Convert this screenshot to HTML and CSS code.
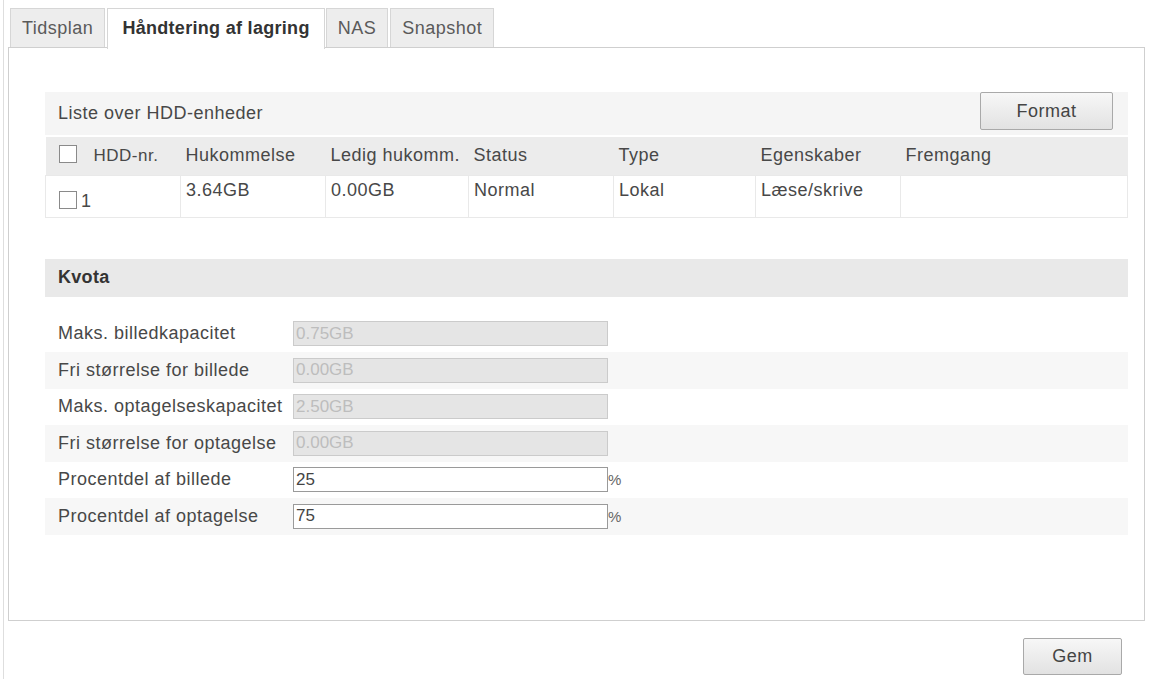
FILE: index.html
```html
<!DOCTYPE html>
<html lang="da">
<head>
    <meta charset="UTF-8">
    <meta name="viewport" content="width=device-width, initial-scale=1.0">
    <link rel="stylesheet" href="styles.css">
</head>
<body>
	<div class="frame">
		<ul class="tabs">
			<li class="tab">Tidsplan</li>
			<li class="tab active">Håndtering af lagring</li>
			<li class="tab">NAS</li>
			<li class="tab">Snapshot</li>
		</ul>
		<div class="panel">
			<div class="section">
				<div class="section-head">
					<span>Liste over HDD-enheder</span>
					<button class="btn btn-format">Format</button>
				</div>
				<table class="hdd">
					<tr class="hdd-header">
						<td class="c1"><span class="check"></span><span class="hdd-no">HDD-nr.</span></td>
						<td class="c2">Hukommelse</td>
						<td class="c3">Ledig hukomm.</td>
						<td class="c4">Status</td>
						<td class="c5">Type</td>
						<td class="c6">Egenskaber</td>
						<td class="c7">Fremgang</td>
					</tr>
					<tr class="hdd-row">
						<td class="c1"><span class="check"></span><span class="row-no">1</span></td>
						<td>3.64GB</td>
						<td>0.00GB</td>
						<td>Normal</td>
						<td>Lokal</td>
						<td>Læse/skrive</td>
						<td></td>
					</tr>
				</table>
			</div>
			<div class="section kvota">
				<div class="section-head bold">Kvota</div>
				<div class="form">
					<div class="form-row">
						<label>Maks. billedkapacitet</label>
						<input class="field" type="text" value="0.75GB" disabled>
					</div>
					<div class="form-row">
						<label>Fri størrelse for billede</label>
						<input class="field" type="text" value="0.00GB" disabled>
					</div>
					<div class="form-row">
						<label>Maks. optagelseskapacitet</label>
						<input class="field" type="text" value="2.50GB" disabled>
					</div>
					<div class="form-row">
						<label>Fri størrelse for optagelse</label>
						<input class="field" type="text" value="0.00GB" disabled>
					</div>
					<div class="form-row">
						<label>Procentdel af billede</label>
						<input class="field" type="text" value="25"><span class="unit">%</span>
					</div>
					<div class="form-row">
						<label>Procentdel af optagelse</label>
						<input class="field" type="text" value="75"><span class="unit">%</span>
					</div>
				</div>
			</div>
		</div>
		<div class="actions">
			<button class="btn btn-save">Gem</button>
		</div>
	</div>
</body>
</html>
```

FILE: styles.css
```css
body {
	margin: 0;
	font-family: "Liberation Sans", Arial, sans-serif;
	font-size: 18px;
	letter-spacing: 0.5px;
	color: #484848;
	background: #fff;
}
.frame {
	margin-left: 3px;
	border-left: 1px solid #dedede;
	padding: 8px 20px 0 4px;
	min-height: 679px;
	box-sizing: border-box;
}
.tabs {
	list-style: none;
	margin: 0 0 0 2px;
	padding: 0;
	display: flex;
	height: 39px;
}
.tab {
	height: 38px;
	line-height: 38px;
	padding: 0 11px;
	margin-right: 2px;
	background: #ededed;
	border: 1px solid #d6d6d6;
	border-bottom: none;
	color: #5a5a5a;
}
.tab.active {
	position: relative;
	z-index: 1;
	height: 40px;
	margin-right: 1px;
	padding: 0 14px;
	background: #fff;
	font-weight: bold;
	letter-spacing: 0.3px;
	color: #333;
}
.panel {
	border: 1px solid #cfcfcf;
	padding: 44px 16px 85px 36px;
	background: #fff;
}
.section-head {
	display: flex;
	align-items: center;
	justify-content: space-between;
	height: 43px;
	padding: 0 15px 0 13px;
	background: #f5f5f5;
}
.section-head.bold {
	height: 38px;
	font-weight: bold;
	letter-spacing: 0.3px;
	background: #e9e9e9;
	color: #333;
}
.btn {
	font-family: "Liberation Sans", Arial, sans-serif;
	font-size: 18px;
	letter-spacing: 0.5px;
	color: #444;
	background: linear-gradient(#f7f7f7, #e2e2e2);
	border: 1px solid #a9a9a9;
	border-radius: 2px;
	padding: 0;
}
.btn-format {
	width: 133px;
	height: 38px;
	margin-top: -5px;
}
.hdd {
	width: 100%;
	margin-top: 2px;
	border-collapse: collapse;
	table-layout: fixed;
}
.hdd td {
	padding: 0 5px;
	white-space: nowrap;
}
.hdd .c1 { width: 135px; padding-left: 13px; box-sizing: border-box; }
.hdd .c2 { width: 145px; box-sizing: border-box; }
.hdd .c3 { width: 143px; box-sizing: border-box; }
.hdd .c4 { width: 145px; box-sizing: border-box; }
.hdd .c5 { width: 142px; box-sizing: border-box; }
.hdd .c6 { width: 145px; box-sizing: border-box; }
.hdd-header {
	height: 38px;
	background: #ececec;
}
.hdd-header td {
	vertical-align: middle;
}
.hdd-row {
	height: 42px;
}
.hdd-row td {
	border: 1px solid #e9e9e9;
	vertical-align: top;
	padding-top: 4px;
}
.hdd-row .c1 {
	padding-top: 15px;
}
.check {
	display: inline-block;
	width: 16px;
	height: 16px;
	border: 1px solid #8a8a8a;
	background: #fff;
	vertical-align: -2px;
}
.hdd-no {
	margin-left: 17px;
	font-size: 17px;
}
.row-no {
	margin-left: 4px;
}
.kvota {
	margin-top: 41px;
}
.form {
	margin-top: 19px;
}
.form-row {
	display: flex;
	align-items: center;
	height: 36.5px;
	padding-left: 13px;
}
.form-row:nth-child(even) {
	background: #f7f7f7;
}
.form-row label {
	width: 235px;
	flex-shrink: 0;
	white-space: nowrap;
}
.field {
	width: 315px;
	height: 25px;
	box-sizing: border-box;
	padding: 0 2px;
	font-family: "Liberation Sans", Arial, sans-serif;
	font-size: 17px;
	color: #444;
	background: #fff;
	border: 1px solid #9a9a9a;
	border-radius: 0;
}
.field:disabled {
	background: #e5e5e5;
	border-color: #cbcbcb;
	color: #bdbdbd;
}
.unit {
	font-size: 15px;
	color: #666;
}
.actions {
	display: flex;
	justify-content: flex-end;
	padding: 17px 23px 0 0;
}
.btn-save {
	width: 99px;
	height: 37px;
}
```
